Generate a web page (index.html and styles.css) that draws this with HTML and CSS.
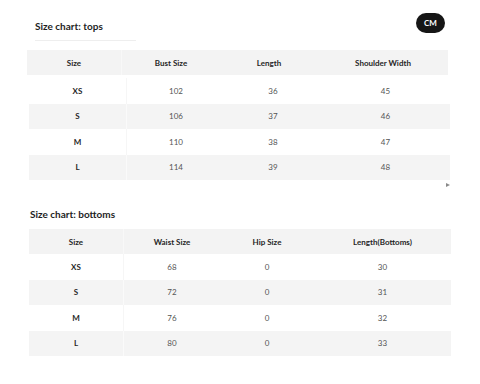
FILE: index.html
```html
<!DOCTYPE html>
<html>
<head>
<meta charset="utf-8">
<link rel="stylesheet" href="styles.css">
</head>
<body>
<div class="tops-head">
  <div class="title-block">
    <div class="title">Size chart: tops</div>
  </div>
  <div class="unit-pill">CM</div>
</div>

<div class="grid tops-cols head-row tops-headrow">
  <div class="cell first">Size</div>
  <div class="cell">Bust Size</div>
  <div class="cell">Length</div>
  <div class="cell">Shoulder Width</div>
</div>
<div class="tops-body">
  <div class="grid tops-body-cols row"><div class="cell first size">XS</div><div class="cell">102</div><div class="cell">36</div><div class="cell">45</div></div>
  <div class="grid tops-body-cols row alt"><div class="cell first size">S</div><div class="cell">106</div><div class="cell">37</div><div class="cell">46</div></div>
  <div class="grid tops-body-cols row"><div class="cell first size">M</div><div class="cell">110</div><div class="cell">38</div><div class="cell">47</div></div>
  <div class="grid tops-body-cols row alt"><div class="cell first size">L</div><div class="cell">114</div><div class="cell">39</div><div class="cell">48</div></div>
</div>
<div class="arrow-row"><span class="arrow"></span></div>

<div class="bottoms-title">Size chart: bottoms</div>
<div class="bottoms">
  <div class="grid bottoms-cols head-row">
    <div class="cell first">Size</div>
    <div class="cell">Waist Size</div>
    <div class="cell">Hip Size</div>
    <div class="cell">Length(Bottoms)</div>
  </div>
  <div class="grid bottoms-cols row"><div class="cell first size">XS</div><div class="cell">68</div><div class="cell">0</div><div class="cell">30</div></div>
  <div class="grid bottoms-cols row alt"><div class="cell first size">S</div><div class="cell">72</div><div class="cell">0</div><div class="cell">31</div></div>
  <div class="grid bottoms-cols row"><div class="cell first size">M</div><div class="cell">76</div><div class="cell">0</div><div class="cell">32</div></div>
  <div class="grid bottoms-cols row alt"><div class="cell first size">L</div><div class="cell">80</div><div class="cell">0</div><div class="cell">33</div></div>
</div>
</body>
</html>
```

FILE: styles.css
```css
html, body {
  margin: 0;
  padding: 0;
  background: #ffffff;
}
body {
  font-family: Lato, "Noto Sans", sans-serif;
  color: #222;
  width: 480px;
  height: 384px;
  overflow: hidden;
}
.tops-head {
  height: 50px;
  box-sizing: border-box;
  padding: 13px 35px 0 35px;
  display: flex;
  justify-content: space-between;
  align-items: flex-start;
}
.title-block {
  width: 101px;
  padding-top: 7px;
}
.title {
  font-size: 10px;
  font-weight: 700;
  line-height: 12px;
  padding-bottom: 8px;
  border-bottom: 1px solid #eeeeee;
  color: #1e1e1e;
  white-space: nowrap;
}
.unit-pill {
  width: 29px;
  height: 20px;
  border-radius: 10px;
  background: #161616;
  color: #fff;
  font-size: 8px;
  font-weight: 700;
  display: flex;
  align-items: center;
  justify-content: center;
}
.grid {
  display: grid;
}
.tops-cols {
  grid-template-columns: 95px 98px 98px 130px;
  margin-left: 27px;
  width: 421px;
}
.tops-body {
  margin-top: 3px;
  margin-left: 29px;
  width: 421px;
}
.tops-body-cols {
  grid-template-columns: 98px 98px 96px 129px;
}
.head-row {
  height: 25px;
  background: #f3f3f3;
  font-weight: 700;
  color: #262626;
}
.row {
  height: 25.5px;
  background: #ffffff;
  color: #555;
}
.row.alt {
  background: #f4f4f4;
}
.cell {
  display: flex;
  align-items: center;
  justify-content: center;
  font-size: 8px;
  white-space: nowrap;
}
.cell.first {
  border-right: 1px solid #f8f8f8;
  box-sizing: border-box;
}
.row .cell.first {
  border-right-color: #f6f6f6;
}
.row.alt .cell.first {
  border-right-color: #fafafa;
}
.cell.size {
  font-weight: 700;
  color: #262626;
}
.arrow-row {
  height: 10px;
  display: flex;
  justify-content: flex-end;
  align-items: center;
  padding-right: 30px;
}
.arrow {
  width: 0;
  height: 0;
  border-top: 2.5px solid transparent;
  border-bottom: 2.5px solid transparent;
  border-left: 4px solid #8a8a8a;
}
.bottoms-title {
  margin-top: 18px;
  margin-bottom: 9px;
  padding-left: 30px;
  font-size: 10px;
  font-weight: 700;
  line-height: 12px;
  color: #1e1e1e;
}
.bottoms {
  margin-left: 29px;
  width: 422px;
}
.bottoms-cols {
  grid-template-columns: 95px 96px 94px 137px;
}
```
